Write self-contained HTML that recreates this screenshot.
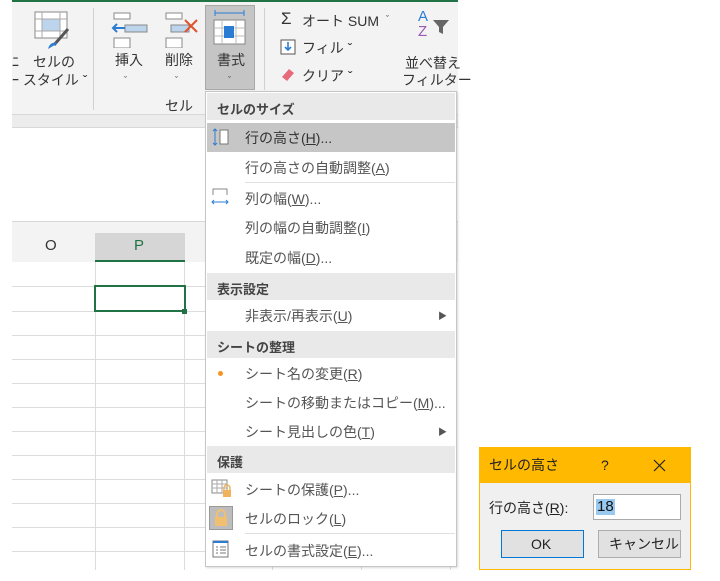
<!DOCTYPE html>
<html><head><meta charset="utf-8"><style>
*{margin:0;padding:0;box-sizing:border-box}
body{width:720px;height:581px;background:#fff;position:relative;overflow:hidden;font-family:"Liberation Sans","Noto Sans CJK JP",sans-serif;color:#333}
.a{position:absolute}
.t{position:absolute;font-size:13px;white-space:nowrap;line-height:16px}
.mi{position:absolute;left:245px;font-size:14px;color:#555;white-space:nowrap;line-height:16px}
.hd{position:absolute;left:207px;width:248px;height:27px;background:#e9e9e9;font-weight:bold;font-size:13px;color:#444;padding:6px 0 0 10px}
u{text-decoration:underline}
.hl{position:absolute;left:12px;width:193px;height:1px;background:#dcdcdc}
.vl{position:absolute;width:1px;background:#dcdcdc}
</style></head><body>
<!-- ribbon -->
<div class="a" style="left:12px;top:0;width:446px;height:2px;background:#217346"></div>
<div class="a" style="left:12px;top:2px;width:446px;height:112px;background:#f3f3f3"></div>
<div class="a" style="left:12px;top:114px;width:446px;height:14px;background:#ececec;border-top:1px solid #d8d8d8;border-bottom:1px solid #d8d8d8"></div>
<div class="a" style="left:93px;top:8px;width:1px;height:102px;background:#d0d0d0"></div>
<div class="a" style="left:264px;top:8px;width:1px;height:82px;background:#d0d0d0"></div>
<svg class="a" style="left:34px;top:11px" width="40" height="40"><rect x="1" y="1" width="32" height="26" fill="#fff" stroke="#888"/><rect x="8" y="8" width="18" height="12" fill="#bcd4ec"/><path d="M1 8h32M1 20h32M8 1v26M26 1v26" stroke="#aaa"/><path d="M20 34l14-16" stroke="#555" stroke-width="3"/><path d="M14 38q2-8 10-6" fill="#2b7cd3"/></svg>
<div class="t" style="left:12px;top:54px;font-size:14px">ﾆ　セルの</div>
<div class="t" style="left:12px;top:72px;font-size:14px">ｰ スタイル ˇ</div>
<svg class="a" style="left:111px;top:12px" width="40" height="36"><rect x="3" y="1" width="16" height="6" fill="#fff" stroke="#888"/><rect x="14" y="13" width="22" height="7" fill="#bcd4ec" stroke="#888"/><path d="M2 16h12M6 12l-4 4 4 4" stroke="#2b7cd3" stroke-width="2" fill="none"/><rect x="3" y="26" width="16" height="10" fill="#fff" stroke="#888"/></svg>
<div class="t" style="left:115px;top:52px;font-size:14px">挿入</div>
<div class="t" style="left:124px;top:72px;font-size:9px">ˇ</div>
<svg class="a" style="left:163px;top:12px" width="40" height="36"><rect x="3" y="1" width="16" height="6" fill="#fff" stroke="#888"/><rect x="8" y="13" width="18" height="7" fill="#bcd4ec" stroke="#888"/><path d="M22 8l12 12M34 8l-12 12" stroke="#e0532a" stroke-width="2"/><rect x="3" y="26" width="16" height="10" fill="#fff" stroke="#888"/></svg>
<div class="t" style="left:165px;top:52px;font-size:14px">削除</div>
<div class="t" style="left:175px;top:72px;font-size:9px">ˇ</div>
<div class="a" style="left:205px;top:5px;width:50px;height:85px;background:#c5c5c5;border:1px solid #a8a8a8"></div>
<svg class="a" style="left:212px;top:10px" width="36" height="38"><path d="M3 3h29M3 0v6M32 0v6" stroke="#2b7cd3"/><rect x="2" y="10" width="31" height="24" fill="#fff" stroke="#888"/><path d="M2 18h31M2 26h31M10 10v24M24 10v24" stroke="#bbb"/><rect x="12" y="16" width="10" height="12" fill="#2b7cd3"/></svg>
<div class="t" style="left:217px;top:52px;font-size:14px">書式</div>
<div class="t" style="left:228px;top:72px;font-size:9px">ˇ</div>
<div class="t" style="left:165px;top:98px;font-size:14px">セル</div>
<div class="t" style="left:281px;top:11px;font-size:17px">Σ</div>
<div class="t" style="left:302px;top:13px;font-size:14px">オート SUM</div>
<div class="t" style="left:386px;top:11px;font-size:9px">ˇ</div>
<svg class="a" style="left:280px;top:39px" width="16" height="16"><rect x="1" y="1" width="14" height="14" fill="#fff" stroke="#555"/><path d="M8 3v8M5 8l3 3 3-3" stroke="#2b7cd3" stroke-width="1.6" fill="none"/></svg>
<div class="t" style="left:302px;top:40px;font-size:14px">フィル ˇ</div>
<svg class="a" style="left:280px;top:67px" width="16" height="14"><path d="M2 10l7-8 5 4-7 8z" fill="#e86a7a"/></svg>
<div class="t" style="left:302px;top:68px;font-size:14px">クリア ˇ</div>
<div class="t" style="left:418px;top:10px;font-size:15px;color:#2b7cd3;line-height:14px">A</div>
<div class="t" style="left:418px;top:25px;font-size:15px;color:#9b59b6;line-height:14px">Z</div>
<svg class="a" style="left:432px;top:18px" width="18" height="18"><path d="M1 2h16l-6 7v7l-4-2V9z" fill="#666"/></svg>
<div class="t" style="left:405px;top:55px;font-size:14px">並べ替え</div>
<div class="t" style="left:402px;top:72px;font-size:14px">フィルター</div>
<!-- sheet -->
<div class="a" style="left:12px;top:221px;width:446px;height:1px;background:#d8d8d8"></div>
<div class="a" style="left:12px;top:222px;width:446px;height:40px;background:#f3f3f3"></div>
<div class="a" style="left:95px;top:233px;width:90px;height:29px;background:#d6d6d6;border-bottom:2px solid #217346"></div>
<div class="t" style="left:45px;top:238px;font-size:15px">O</div>
<div class="t" style="left:134px;top:238px;font-size:15px;color:#217346">P</div>
<div class="hl" style="top:286px"></div><div class="hl" style="top:311px"></div><div class="hl" style="top:335px"></div><div class="hl" style="top:359px"></div><div class="hl" style="top:383px"></div><div class="hl" style="top:407px"></div><div class="hl" style="top:431px"></div><div class="hl" style="top:455px"></div><div class="hl" style="top:479px"></div><div class="hl" style="top:503px"></div><div class="hl" style="top:527px"></div><div class="hl" style="top:551px"></div>
<div class="vl" style="left:95px;top:262px;height:308px"></div>
<div class="vl" style="left:184px;top:262px;height:308px"></div>
<div class="vl" style="left:272px;top:555px;height:15px"></div>
<div class="vl" style="left:361px;top:555px;height:15px"></div>
<div class="vl" style="left:450px;top:555px;height:15px"></div>
<div class="a" style="left:94px;top:285px;width:92px;height:27px;border:2px solid #217346"></div>
<div class="a" style="left:182px;top:309px;width:5px;height:5px;background:#217346"></div>
<!-- menu -->
<div class="a" style="left:205px;top:91px;width:252px;height:476px;background:#fff;border:1px solid #c6c6c6;box-shadow:1px 1px 2px rgba(0,0,0,.15)"></div>
<div class="hd" style="top:93px">セルのサイズ</div>
<div class="a" style="left:207px;top:123px;width:248px;height:29px;background:#c6c6c6"></div>
<svg class="a" style="left:212px;top:128px" width="20" height="18"><path d="M3 1v16M1 3l2-2 2 2M1 15l2 2 2-2" stroke="#2b7cd3" fill="none"/><rect x="8" y="2" width="8" height="14" fill="#fff" stroke="#777"/></svg>
<div class="mi" style="top:130px;color:#333">行の高さ(<u>H</u>)...</div>
<div class="mi" style="top:160px">行の高さの自動調整(<u>A</u>)</div>
<div class="a" style="left:245px;top:182px;width:210px;height:1px;background:#e0e0e0"></div>
<svg class="a" style="left:211px;top:188px" width="20" height="18"><path d="M2 7V1h14v6" stroke="#888" fill="none"/><path d="M1 14h16M3 12l-2 2 2 2M15 12l2 2-2 2" stroke="#2b7cd3" fill="none"/></svg>
<div class="mi" style="top:191px">列の幅(<u>W</u>)...</div>
<div class="mi" style="top:220px">列の幅の自動調整(<u>I</u>)</div>
<div class="mi" style="top:250px">既定の幅(<u>D</u>)...</div>
<div class="hd" style="top:273px">表示設定</div>
<div class="mi" style="top:308px">非表示/再表示(<u>U</u>)</div>
<div class="t" style="left:438px;top:308px;font-size:9px;color:#555">▶</div>
<div class="hd" style="top:331px">シートの整理</div>
<div class="a" style="left:218px;top:371px;width:5px;height:5px;border-radius:50%;background:#f7941d"></div>
<div class="mi" style="top:366px">シート名の変更(<u>R</u>)</div>
<div class="mi" style="top:395px">シートの移動またはコピー(<u>M</u>)...</div>
<div class="mi" style="top:424px">シート見出しの色(<u>T</u>)</div>
<div class="t" style="left:438px;top:424px;font-size:9px;color:#555">▶</div>
<div class="hd" style="top:446px">保護</div>
<svg class="a" style="left:211px;top:479px" width="22" height="20"><rect x="1" y="1" width="15" height="13" fill="#fff" stroke="#888"/><path d="M1 5h15M1 9h15M6 1v13M11 1v13" stroke="#aaa"/><rect x="12" y="11" width="8" height="7" fill="#f0b35a"/><path d="M13 11V9a3 3 0 0 1 6 0v2" stroke="#f0b35a" fill="none" stroke-width="1.5"/></svg>
<div class="mi" style="top:482px">シートの保護(<u>P</u>)...</div>
<div class="a" style="left:209px;top:506px;width:24px;height:24px;background:#bdbdbd;border:1px solid #999"></div>
<svg class="a" style="left:213px;top:509px" width="16" height="18"><path d="M4 8V5a4 4 0 0 1 8 0v3" stroke="#f0c070" stroke-width="2" fill="none"/><rect x="2" y="8" width="12" height="9" fill="#f0c070"/></svg>
<div class="mi" style="top:511px">セルのロック(<u>L</u>)</div>
<div class="a" style="left:245px;top:533px;width:210px;height:1px;background:#e0e0e0"></div>
<svg class="a" style="left:212px;top:540px" width="18" height="18"><rect x="1" y="1" width="15" height="16" fill="#fff" stroke="#777"/><rect x="1" y="1" width="15" height="2" fill="#2b7cd3"/><path d="M4 7h2M8 7h6M4 10h2M8 10h6M4 13h2M8 13h6" stroke="#777"/></svg>
<div class="mi" style="top:543px">セルの書式設定(<u>E</u>)...</div>
<!-- dialog -->
<div class="a" style="left:479px;top:447px;width:212px;height:123px;background:#f0f0f0;border:1px solid #ffb900"></div>
<div class="a" style="left:479px;top:447px;width:212px;height:36px;background:#ffb900"></div>
<div class="t" style="left:489px;top:457px;color:#222;font-size:14px">セルの高さ</div>
<div class="t" style="left:601px;top:457px;color:#222;font-size:14px">?</div>
<svg class="a" style="left:653px;top:459px" width="13" height="13"><path d="M1 1l11 11M12 1L1 12" stroke="#222" stroke-width="1.2"/></svg>
<div class="t" style="left:489px;top:500px;color:#222;font-size:14px">行の高さ(<u>R</u>):</div>
<div class="a" style="left:593px;top:494px;width:88px;height:26px;background:#fff;border:1px solid #aaa"></div>
<div class="t" style="left:596px;top:499px;background:#99c9ef;color:#111;font-size:15px;padding:0 1px">18</div>
<div class="a" style="left:501px;top:530px;width:83px;height:28px;background:#e1e1e1;border:1px solid #0078d7"></div>
<div class="t" style="left:531px;top:536px;color:#222;font-size:14px">OK</div>
<div class="a" style="left:598px;top:530px;width:83px;height:28px;background:#e1e1e1;border:1px solid #adadad"></div>
<div class="t" style="left:609px;top:536px;color:#222;font-size:14px">キャンセル</div>
</body></html>
